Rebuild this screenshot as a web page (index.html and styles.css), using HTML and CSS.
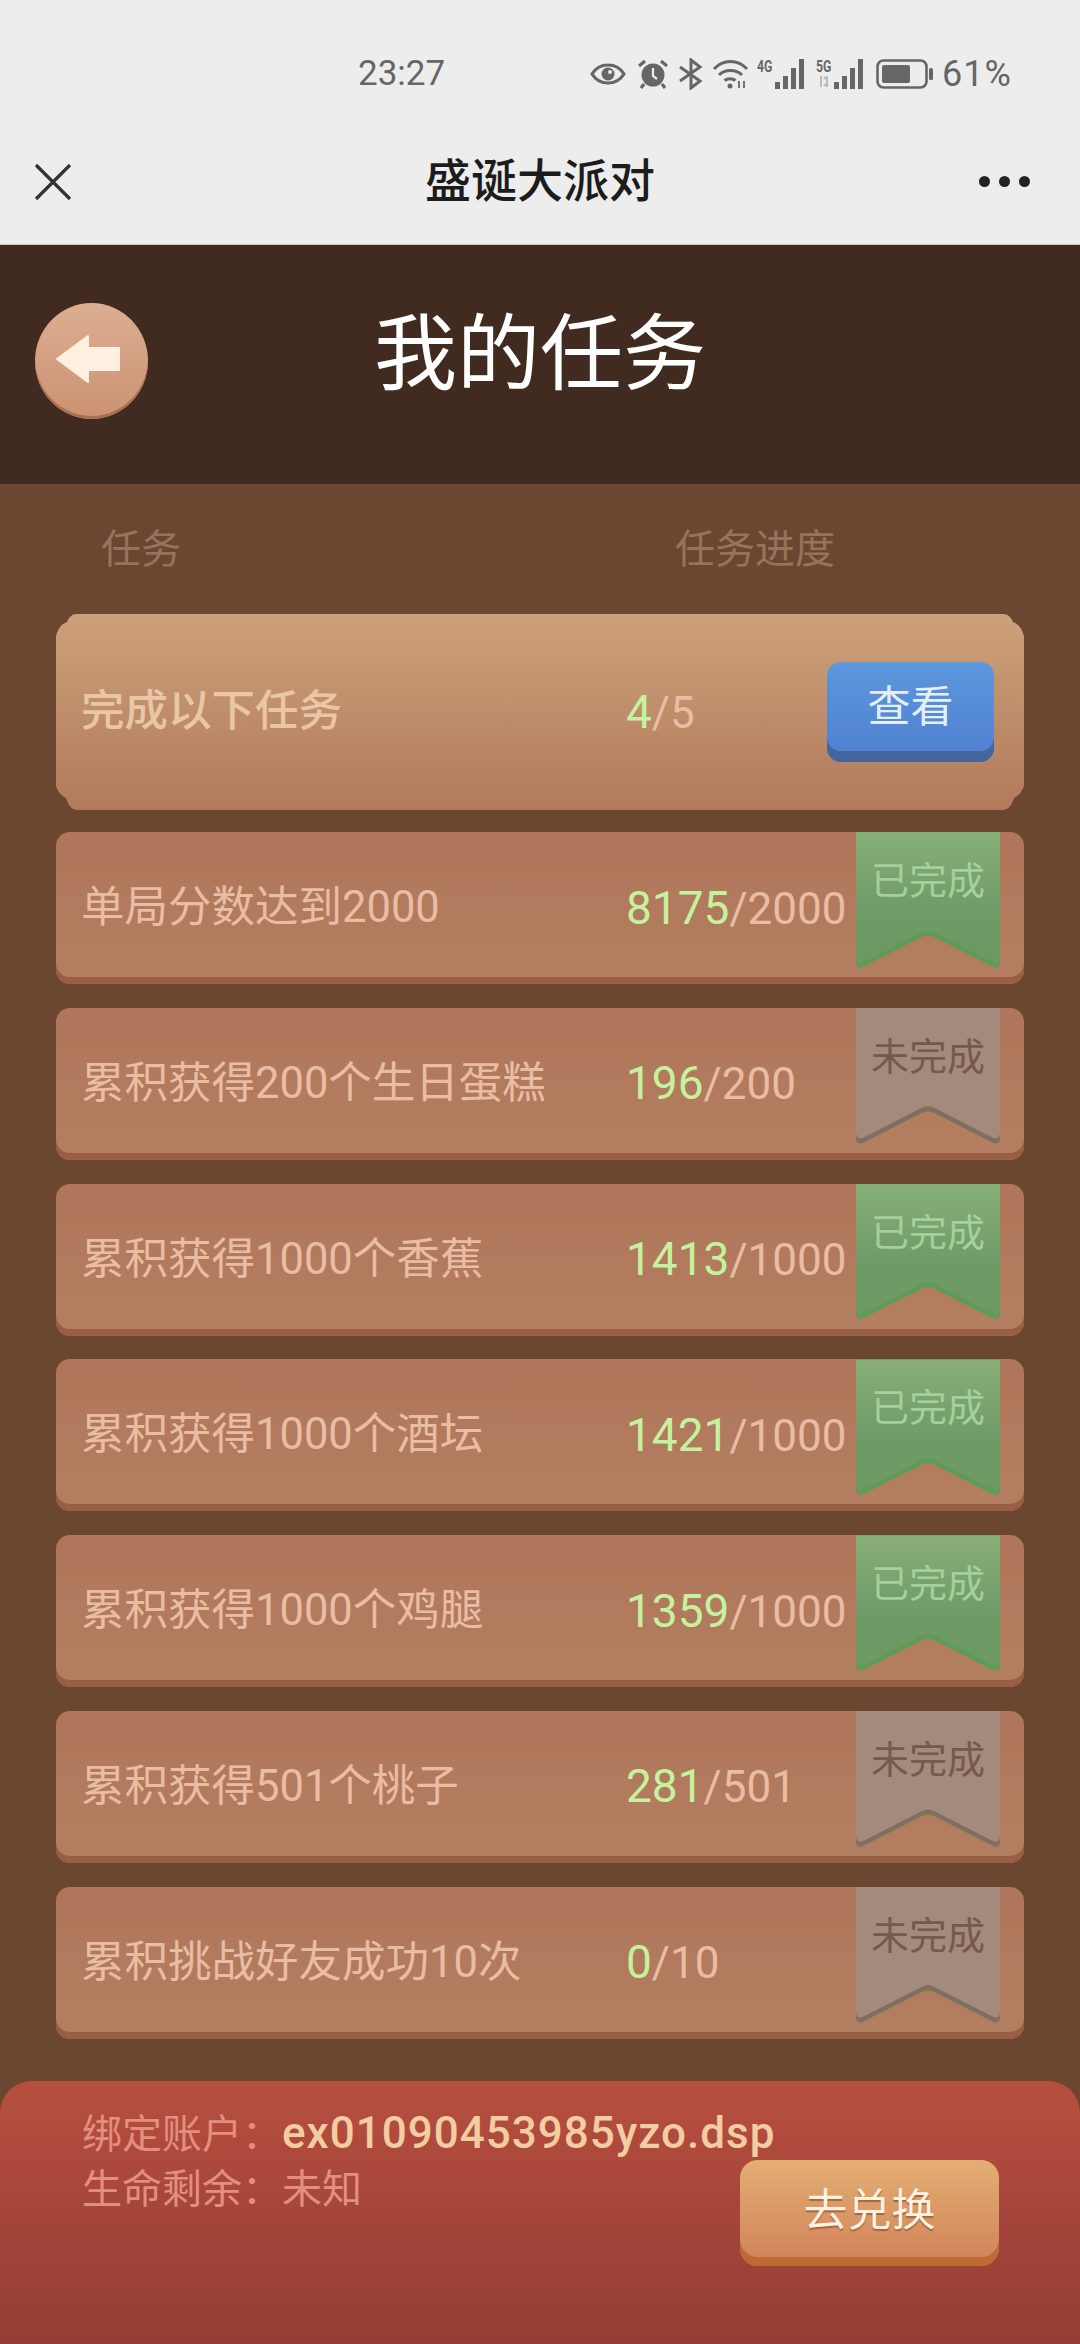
FILE: index.html
```html
<!DOCTYPE html>
<html lang="zh-CN">
<head>
    <meta charset="UTF-8">
    <meta name="viewport" content="width=device-width, initial-scale=1.0">
    <title>盛诞大派对</title>
    <link rel="stylesheet" href="styles.css">
</head>
<body>
    <div class="status-bar">
        <span class="clock">23:27</span>
        <div class="status-icons">
            <svg class="icon-eye" width="36" height="22" viewBox="0 0 36 22"><path d="M2 11C6 4.500 11.500 2 18 2s12 2.500 16 9c-4 6.500-9.500 9-16 9S6 17.500 2 11z" fill="none" stroke="#666" stroke-width="3.200"/><circle cx="18" cy="11" r="6.500" fill="#666"/><circle cx="20" cy="9" r="2" fill="#ededed"/></svg>
            <svg class="icon-alarm" width="30" height="30" viewBox="0 0 30 30"><circle cx="15" cy="16" r="11.500" fill="#666"/><path d="M15 9v8l4 3" fill="none" stroke="#ededed" stroke-width="2.200"/><path d="M1 7l6-5M29 7l-6-5M6 25l-3 4M24 25l3 4" stroke="#666" stroke-width="3.200" fill="none"/></svg>
            <svg class="icon-bt" width="26" height="32" viewBox="0 0 26 32"><path d="M2 9l20 14-9 7V2l9 7L2 23" fill="none" stroke="#666" stroke-width="3"/></svg>
            <svg class="icon-wifi" width="35" height="30" viewBox="0 0 35 30"><path d="M1 10C10 0 25 0 34 10M6 16c6-6 17-6 23 0M11.500 21.500c3-2.500 8-2.500 11 0" fill="none" stroke="#666" stroke-width="3"/><circle cx="17" cy="27" r="2.500" fill="#666"/><path d="M26 22v7M31 22v7" stroke="#666" stroke-width="1.800"/></svg>
            <div class="signal">
                <div class="net-label"><span>4G</span></div>
                <svg width="32" height="30" viewBox="0 0 32 30"><path d="M2 23h5v7H2zM10 17h5v13h-5zM18 9h5v21h-5zM26 0h5v30h-5z" fill="#666"/></svg>
            </div>
            <div class="signal">
                <div class="net-label">
                    <span>5G</span>
                    <svg width="16" height="11" viewBox="0 0 16 11"><path d="M5 0v11M11 0v11M8 3l3-3M8 8l3 3" stroke="#bbb" stroke-width="2" fill="none"/></svg>
                </div>
                <svg width="32" height="30" viewBox="0 0 32 30"><path d="M2 23h5v7H2zM10 17h5v13h-5zM18 9h5v21h-5zM26 0h5v30h-5z" fill="#666"/></svg>
            </div>
            <svg class="icon-battery" width="57" height="30" viewBox="0 0 57 30"><rect x="1.500" y="1.500" width="49" height="27" rx="6" fill="none" stroke="#666" stroke-width="2.600"/><rect x="6" y="6" width="28" height="18" rx="2" fill="#666"/><rect x="53" y="9" width="4" height="12" rx="1.500" fill="#666"/></svg>
            <span class="battery-text">61%</span>
        </div>
    </div>

    <div class="nav-bar">
        <svg class="nav-close" width="38" height="38" viewBox="0 0 38 38"><path d="M2 2l34 34M36 2L2 36" stroke="#333" stroke-width="3.200" fill="none"/></svg>
        <span class="nav-title">盛诞大派对</span>
        <div class="nav-more"><i></i><i></i><i></i></div>
    </div>

    <div class="page-header">
        <button class="back-btn" type="button">
            <svg width="66" height="50" viewBox="0 0 66 50"><path d="M2 25L33 2v12h31v22H33v12z" fill="#fdf0e0" stroke="#fdf0e0" stroke-width="2" stroke-linejoin="round"/></svg>
        </button>
        <h1>我的任务</h1>
    </div>

    <div class="task-panel">
        <div class="columns">
            <span class="col-name">任务</span>
            <span class="col-progress">任务进度</span>
        </div>

        <div class="summary">
            <span class="task-name">完成以下任务</span>
            <span class="progress"><b>4</b>/5</span>
            <button class="view-btn" type="button">查看</button>
        </div>

        <div class="task-list">
            <div class="task">
                <span class="task-name">单局分数达到2000</span>
                <span class="progress"><b>8175</b>/2000</span>
                <span class="ribbon done">已完成</span>
            </div>
            <div class="task">
                <span class="task-name">累积获得200个生日蛋糕</span>
                <span class="progress"><b>196</b>/200</span>
                <span class="ribbon todo">未完成</span>
            </div>
            <div class="task">
                <span class="task-name">累积获得1000个香蕉</span>
                <span class="progress"><b>1413</b>/1000</span>
                <span class="ribbon done">已完成</span>
            </div>
            <div class="task">
                <span class="task-name">累积获得1000个酒坛</span>
                <span class="progress"><b>1421</b>/1000</span>
                <span class="ribbon done">已完成</span>
            </div>
            <div class="task">
                <span class="task-name">累积获得1000个鸡腿</span>
                <span class="progress"><b>1359</b>/1000</span>
                <span class="ribbon done">已完成</span>
            </div>
            <div class="task">
                <span class="task-name">累积获得501个桃子</span>
                <span class="progress"><b>281</b>/501</span>
                <span class="ribbon todo">未完成</span>
            </div>
            <div class="task">
                <span class="task-name">累积挑战好友成功10次</span>
                <span class="progress"><b>0</b>/10</span>
                <span class="ribbon todo">未完成</span>
            </div>
        </div>
    </div>

    <div class="account">
        <div class="account-info">
            <p>绑定账户：<strong>ex01090453985yzo.dsp</strong></p>
            <p>生命剩余：未知</p>
        </div>
        <button class="exchange-btn" type="button">去兑换</button>
    </div>
</body>
</html>
```

FILE: styles.css
```css
* {
    box-sizing: border-box;
}

html, body {
    height: 100%;
}

body {
    margin: 0;
    width: 1080px;
    height: 2344px;
    overflow: hidden;
    display: flex;
    flex-direction: column;
    font-family: Roboto, 'Noto Sans CJK SC', sans-serif;
    background-color: #6b4631;
}

button {
    font-family: inherit;
    border: none;
    padding: 0;
}

.status-bar {
    height: 146px;
    padding: 55px 73px 0 358px;
    display: flex;
    align-items: flex-start;
    justify-content: space-between;
    background-color: #ededed;
    color: #666;
}

.clock {
    font-size: 35px;
    line-height: 38px;
}

.status-icons {
    display: flex;
    align-items: center;
    height: 38px;
}

.icon-alarm {
    margin-left: 12px;
}

.icon-bt {
    margin-left: 10px;
}

.icon-wifi {
    margin-left: 9px;
}

.signal {
    display: flex;
    align-items: flex-start;
    margin-left: 8px;
}

.signal + .signal {
    margin-left: 10px;
}

.net-label {
    width: 17px;
    height: 30px;
    display: flex;
    flex-direction: column;
    align-items: center;
    gap: 2px;
    font-size: 17px;
    line-height: 15px;
    font-weight: 700;
}

.net-label span {
    transform: scaleX(0.72);
}

.icon-battery {
    margin-left: 12px;
}

.battery-text {
    margin-left: 9px;
    width: 65px;
    font-size: 36px;
    line-height: 38px;
    white-space: nowrap;
    letter-spacing: 1px;
}

.nav-bar {
    height: 99px;
    padding: 0 34px;
    display: grid;
    grid-template-columns: 1fr auto 1fr;
    align-items: start;
    background-color: #ededed;
    border-bottom: 1px solid #cfc8c4;
}

.nav-close {
    margin-top: 17px;
}

.nav-title {
    font-size: 46px;
    line-height: 71px;
    font-weight: 500;
    color: #1c1c1c;
}

.nav-more {
    justify-self: end;
    display: flex;
    gap: 9px;
    margin: 30px 16px 0 0;
}

.nav-more i {
    width: 11px;
    height: 11px;
    border-radius: 50%;
    background-color: #222;
}

.page-header {
    position: relative;
    height: 239px;
    display: flex;
    align-items: center;
    justify-content: center;
    background-color: #412a20;
}

.page-header h1 {
    margin: 0 0 20px;
    font-size: 83px;
    line-height: 100px;
    font-weight: 400;
    color: #fff;
}

.back-btn {
    position: absolute;
    left: 35px;
    top: 58px;
    width: 113px;
    height: 116px;
    border-radius: 50%;
    display: flex;
    align-items: center;
    justify-content: center;
    background: linear-gradient(#dcae91, #cb9273);
    box-shadow: inset 0 -3px 0 #a96f50;
}

.back-btn svg {
    margin-right: 8px;
    margin-top: -4px;
}

.task-panel {
    flex: 1;
    padding: 0 56px;
}

.columns {
    height: 130px;
    padding: 38px 0 0 45px;
    display: flex;
    font-size: 40px;
    line-height: 56px;
    color: #96735c;
}

.col-name {
    width: 574px;
}

.summary {
    height: 196px;
    display: flex;
    align-items: center;
    padding: 0 30px 0 25px;
    background: linear-gradient(#cca17b, #b27a5b);
    clip-path: path("M21 0H947C952 0 955 3 957 8C963 10 966 15 968 22V172C966 178 962 182 958 184C956 191 952 196 947 196H21C16 196 12 191 10 184C6 182 2 178 0 172V22C2 15 5 10 11 8C13 3 16 0 21 0Z");
}

.summary .task-name {
    font-weight: 500;
    color: #e9c6a6;
}

.task-name {
    flex: 0 0 545px;
    font-size: 43.500px;
    line-height: 60px;
    color: #e9bca3;
    white-space: nowrap;
}

.progress {
    font-size: 44px;
    line-height: 60px;
    color: #e9bca3;
    white-space: nowrap;
}

.progress b {
    font-size: 46px;
    font-weight: 400;
    color: #c5f29f;
}

.view-btn {
    margin-left: auto;
    width: 167px;
    height: 100px;
    padding-bottom: 18px;
    border-radius: 14px;
    font-size: 43px;
    color: #e4effa;
    background: linear-gradient(#5d97dc, #4f7fd2);
    box-shadow: inset 0 -11px 0 #43669f;
}

.task-list {
    margin-top: 22px;
    display: flex;
    flex-direction: column;
    gap: 23.800px;
}

.task {
    position: relative;
    height: 152px;
    padding-left: 25px;
    display: flex;
    align-items: center;
    border-radius: 14px;
    background: linear-gradient(#b0755a, #b37f61);
    box-shadow: inset 0 -7px 0 #985f42;
}

.ribbon {
    position: absolute;
    top: 0;
    right: 24px;
    width: 144px;
    height: 138px;
    padding-top: 24px;
    isolation: isolate;
    text-align: center;
    font-size: 38px;
    line-height: 50px;
    clip-path: path("M0 0H144V129Q144 139 135 134L78 105Q72 102 66 105L9 134Q0 139 0 129Z");
}

.ribbon::before {
    content: "";
    position: absolute;
    inset: 0;
    z-index: -1;
    clip-path: path("M0 0H144V124Q144 134 135 129L78 100Q72 97 66 100L9 129Q0 134 0 124Z");
}

.ribbon.done {
    color: #a3d09b;
    background: #5f9a58;
}

.ribbon.done::before {
    background: linear-gradient(#87ae77, #6f9a66 60%, #6b9a62);
}

.ribbon.todo {
    color: #75594c;
    background: #7f6e62;
}

.ribbon.todo::before {
    background: #a38a7a;
}

.account {
    height: 263px;
    padding: 25px 81px 0 82px;
    display: flex;
    align-items: flex-start;
    border-radius: 32px 32px 0 0;
    background: linear-gradient(#b74f40, #943c33);
}

.account-info {
    flex: 1;
    min-width: 0;
}

.account-info p {
    margin: 0;
    font-size: 40px;
    line-height: 55px;
    color: #e38f7e;
    white-space: nowrap;
}

.account-info strong {
    font-size: 44px;
    font-weight: 500;
    letter-spacing: 1px;
    color: #f2cda1;
}

.exchange-btn {
    flex: none;
    margin-top: 54px;
    width: 259px;
    height: 106px;
    padding-bottom: 13px;
    border-radius: 18px;
    font-size: 44px;
    color: #fdf1e0;
    text-shadow: 0 2px 1px #a9653c;
    background: linear-gradient(#e4af73, #d08159);
    box-shadow: inset 0 -9px 0 #bd6a33;
}
```
